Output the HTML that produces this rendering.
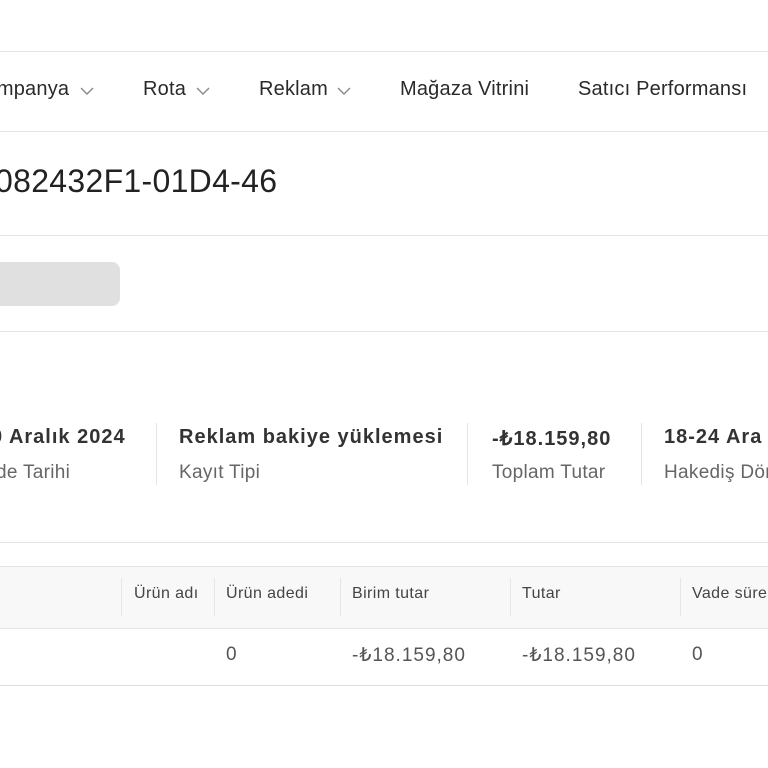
<!DOCTYPE html>
<html><head><meta charset="utf-8"><style>
html,body{overflow:hidden}
body{margin:0;width:768px;height:768px;background:#fff;font-family:"Liberation Sans",sans-serif;color:#222;position:relative}
.a{position:absolute;white-space:nowrap}
.hl{position:absolute;left:0;width:768px;height:1px;background:#e4e4e4}
.nav{font-size:20px;top:78px;color:#2a2a2a;letter-spacing:0.2px}
.chev{position:absolute;top:87px;width:14px;height:8px}
.v{font-size:20px;font-weight:bold;top:426px;color:#333;letter-spacing:1px}
.l{font-size:19px;top:462px;color:#666;letter-spacing:0.3px}
.vd{position:absolute;top:423px;width:1px;height:62px;background:#e4e4e4}
.th{font-size:16px;top:585px;color:#444;letter-spacing:0.4px}
.td{font-size:19px;top:644px;color:#555;letter-spacing:1px}
.cs{position:absolute;top:578px;width:1px;height:38px;background:#e6e6e6}
</style></head><body>
<div class="hl" style="top:51px"></div>
<div class="a nav" style="left:-28px">Kampanya</div>
<svg class="chev" style="left:80px" viewBox="0 0 14 8"><path d="M1 1l6 6 6-6" fill="none" stroke="#888" stroke-width="1.4"/></svg>
<div class="a nav" style="left:143px">Rota</div>
<svg class="chev" style="left:196px" viewBox="0 0 14 8"><path d="M1 1l6 6 6-6" fill="none" stroke="#888" stroke-width="1.4"/></svg>
<div class="a nav" style="left:259px">Reklam</div>
<svg class="chev" style="left:337px" viewBox="0 0 14 8"><path d="M1 1l6 6 6-6" fill="none" stroke="#888" stroke-width="1.4"/></svg>
<div class="a nav" style="left:400px">Mağaza Vitrini</div>
<div class="a nav" style="left:578px">Satıcı Performansı</div>
<div class="hl" style="top:131px"></div>
<div class="a" style="left:-5px;top:163px;font-size:32px;color:#222;letter-spacing:0.3px">082432F1-01D4-46</div>
<div class="hl" style="top:235px"></div>
<div class="a" style="left:-10px;top:262px;width:130px;height:44px;border-radius:8px;background:#e0e0e0"></div>
<div class="hl" style="top:331px"></div>
<div class="a v" style="left:-9px">0 Aralık 2024</div>
<div class="a l" style="left:-4px">de Tarihi</div>
<div class="vd" style="left:156px"></div>
<div class="a v" style="left:179px">Reklam bakiye yüklemesi</div>
<div class="a l" style="left:179px">Kayıt Tipi</div>
<div class="vd" style="left:467px"></div>
<div class="a v" style="left:492px">-₺18.159,80</div>
<div class="a l" style="left:492px">Toplam Tutar</div>
<div class="vd" style="left:641px"></div>
<div class="a v" style="left:664px">18-24 Ara</div>
<div class="a l" style="left:664px">Hakediş Dön</div>
<div class="hl" style="top:542px"></div>
<div class="a" style="left:0;top:566px;width:768px;height:61px;background:#f8f8f8;border-top:1px solid #e4e4e4;border-bottom:1px solid #e4e4e4"></div>
<div class="cs" style="left:121px"></div><div class="cs" style="left:214px"></div><div class="cs" style="left:340px"></div><div class="cs" style="left:510px"></div><div class="cs" style="left:680px"></div>
<div class="a th" style="left:134px">Ürün adı</div>
<div class="a th" style="left:226px">Ürün adedi</div>
<div class="a th" style="left:352px">Birim tutar</div>
<div class="a th" style="left:522px">Tutar</div>
<div class="a th" style="left:692px">Vade süre</div>
<div class="a td" style="left:226px">0</div>
<div class="a td" style="left:352px">-₺18.159,80</div>
<div class="a td" style="left:522px">-₺18.159,80</div>
<div class="a td" style="left:692px">0</div>
<div class="hl" style="top:685px;background:#ddd"></div>
</body></html>
